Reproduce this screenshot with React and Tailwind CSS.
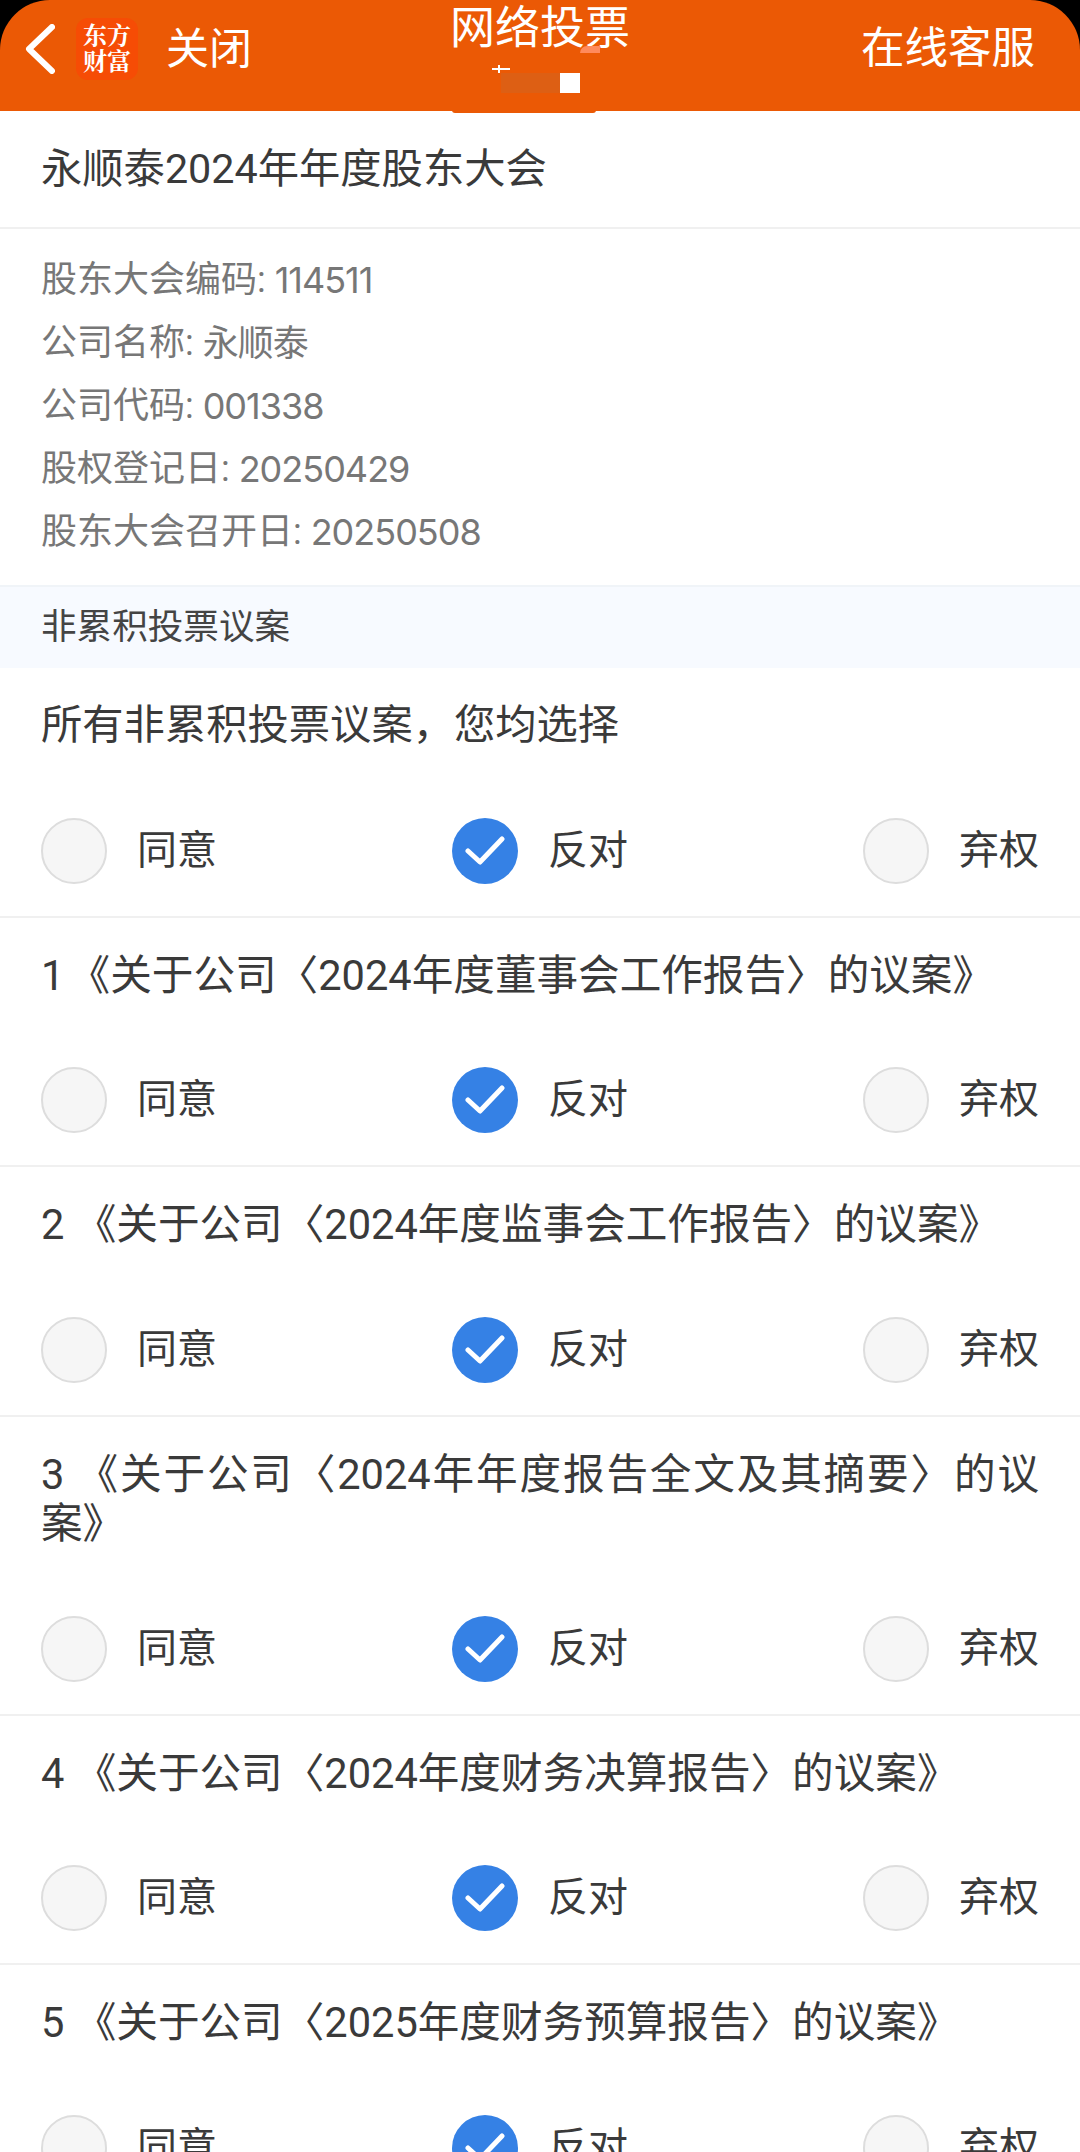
import React from "react";

const info = [
  ["股东大会编码: ", "114511"],
  ["公司名称: ", "永顺泰"],
  ["公司代码: ", "001338"],
  ["股权登记日: ", "20250429"],
  ["股东大会召开日: ", "20250508"],
];

const motions = [
  "1\u200a《关于公司〈2024年度董事会工作报告〉的议案》",
  "2 《关于公司〈2024年度监事会工作报告〉的议案》",
  "3 《关于公司〈2024年年度报告全文及其摘要〉的议案》",
  "4 《关于公司〈2024年度财务决算报告〉的议案》",
  "5 《关于公司〈2025年度财务预算报告〉的议案》",
];

function Radio({ label, checked }) {
  return (
    <div className="flex items-center gap-[30px]">
      {checked ? (
        <div className="w-[66px] h-[66px] rounded-full bg-[#3581e5] flex items-center justify-center">
          <svg width="40" height="32" viewBox="0 0 40 32" fill="none">
            <path d="M3 16 L15 27 L37 4" stroke="#fff" strokeWidth="5" strokeLinecap="round" strokeLinejoin="round" />
          </svg>
        </div>
      ) : (
        <div className="w-[66px] h-[66px] rounded-full bg-[#f6f6f6] border-2 border-[#dddddd]" />
      )}
      <span className="text-[40px] leading-[50px] text-[#3a3a3a]">{label}</span>
    </div>
  );
}

function Motion({ title, sizeClass = "text-[41.6px]" }) {
  return (
    <div className="border-b-2 border-[#f0f0f0] px-[41px] pt-[33px] pb-[32px]">
      <div className={`${sizeClass} leading-[49.5px] text-[#3a3a3a] text-justify`}>{title}</div>
      <div className="flex justify-between mt-[67px]">
        <Radio label="同意" />
        <Radio label="反对" checked />
        <Radio label="弃权" />
      </div>
    </div>
  );
}

export default function App() {
  return (
    <div className="h-[2152px] overflow-hidden bg-black font-['Roboto','Noto_Sans_CJK_SC',sans-serif]">
      {/* Header */}
      <div className="relative h-[111px] bg-[#eb5905] rounded-t-[50px] pb-[13px] flex items-center text-white">
        <svg className="ml-[25px]" width="30" height="50" viewBox="0 0 30 50" fill="none">
          <path d="M27 3 L4 25 L27 47" stroke="#fff" strokeWidth="6" strokeLinecap="round" strokeLinejoin="round" />
        </svg>
        <div className="ml-[21px] w-[62px] h-[62px] rounded-[12px] bg-[#f64c05] flex items-center justify-center text-center text-[24px] leading-[26px] font-bold font-['Liberation_Serif','Noto_Serif_CJK_SC','Noto_Sans_CJK_SC',serif]">
          东方<br />财富
        </div>
        <span className="ml-[28px] text-[43px] leading-none">关闭</span>
        <span className="ml-auto mr-[45px] text-[43.5px] leading-none">在线客服</span>

        {/* title with the redacted bits under it */}
        <span className="absolute left-[450px] top-[4px] text-[45px] leading-[50px]">网络投票</span>
        <div className="absolute left-[452px] top-[105px] w-[144px] h-[8px] bg-[#eb5905] rounded-b-[3px]" />
        <div className="absolute left-[501px] top-[73px] w-[59px] h-[20px] bg-[#dd5f14]" />
        <div className="absolute left-[560px] top-[73px] w-[20px] h-[20px] bg-white" />
        <div className="absolute left-[580px] top-[46px] w-[20px] h-[7px] bg-[#ff8a5c] rounded-tl-[14px]" />
        <div className="absolute left-[492px] top-[68px] w-[18px] h-[2px] bg-white" />
        <div className="absolute left-[498px] top-[65px] w-[2px] h-[8px] bg-white" />
      </div>

      <div className="bg-white">
        <div className="h-[118px] border-b-2 border-[#f0f0f0] px-[41px] pt-[2px] flex items-center text-[41.3px] text-[#3a3a3a]">
          永顺泰2024年年度股东大会
        </div>

        <div className="px-[41px] pt-[19px] pb-[21px]">
          {info.map(([label, value]) => (
            <div key={label} className="h-[63.2px] flex items-center text-[36px] text-[#777] whitespace-pre">
              {label}
              <span className="font-['Inter','Noto_Sans_CJK_SC',sans-serif] tracking-[-1px]">{value}</span>
            </div>
          ))}
        </div>

        <div className="h-[83.4px] bg-[#f7faff] border-t-2 border-[#f0f4f8] px-[41px] flex items-center text-[35.6px] text-[#444]">
          非累积投票议案
        </div>

        <Motion title="所有非累积投票议案，您均选择" sizeClass="text-[41.3px]" />
        {motions.map((title) => (
          <Motion key={title} title={title} />
        ))}
      </div>
    </div>
  );
}
